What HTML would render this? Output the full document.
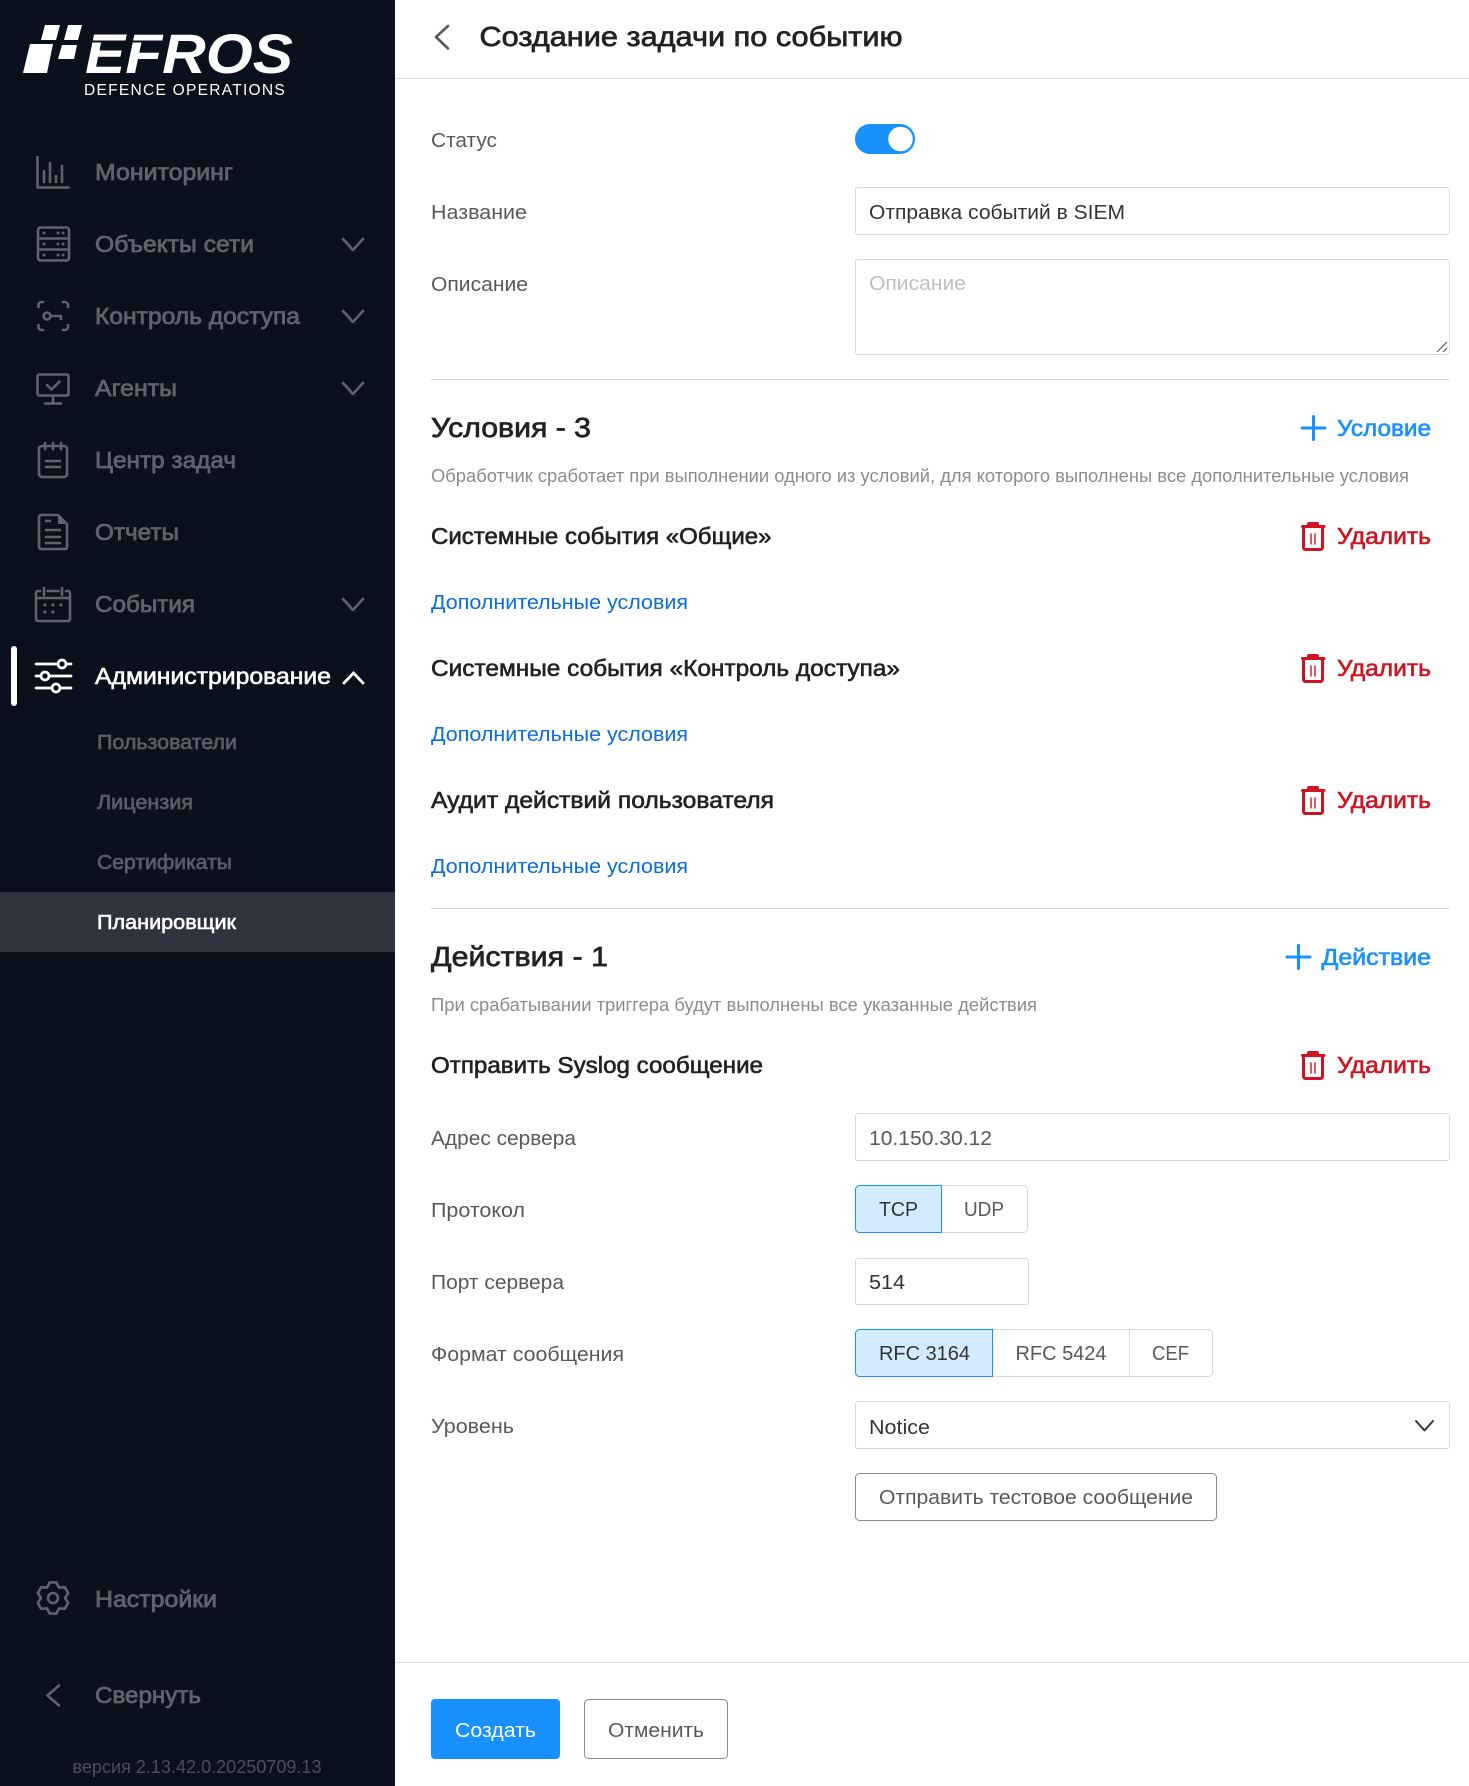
<!DOCTYPE html>
<html lang="ru"><head><meta charset="utf-8"><title>Создание задачи по событию</title>
<style>
html,body{margin:0;padding:0;background:#fff;width:1469px;height:1786px;overflow:hidden}
svg{display:block}
text{font-family:"Liberation Sans",Arial,sans-serif;white-space:pre}
.n{font-size:22.8px;fill:#5f636d;stroke:#5f636d;stroke-width:.75px}
.s{font-size:20.5px;fill:#595d67;stroke:#595d67;stroke-width:.7px}
.n.w,.s.w{fill:#fff;stroke:#fff;stroke-width:.6px}
.l{font-size:20.5px;fill:#595959}
.v{font-size:20.5px;fill:#333}
.h{font-size:27.3px;fill:#222;stroke:#222;stroke-width:.7px}
.t{font-size:22.8px;fill:#222;stroke:#222;stroke-width:.6px}
.d{font-size:18.2px;fill:#8c8c8c}
.a{font-size:22.8px;fill:#1890ff;stroke:#1890ff;stroke-width:.6px}
.r{font-size:22.8px;fill:#cf1322;stroke:#cf1322;stroke-width:.6px}
.k{font-size:20.5px;fill:#096dd9}
.ic{fill:none;stroke:#5f636d;stroke-width:2.6;stroke-linecap:round;stroke-linejoin:round}
.dot{fill:#5f636d;stroke:none}
.bd{fill:#fff;stroke:#d9d9d9;stroke-width:1}
</style></head><body>
<svg width="1469" height="1786" viewBox="0 0 1469 1786" xmlns="http://www.w3.org/2000/svg">
<rect width="1469" height="1786" fill="#fff"/>
<rect width="395" height="1786" fill="#0b111c"/>

<!-- logo -->
<g fill="#fff">
<polygon points="23,73 30,44 53,44 47,73"/>
<polygon points="45,25 60,25 56,40 41,40"/>
<polygon points="68,25 82,25 78,40 64,40"/>
<polygon points="62,45 77,45 74,59 58,59"/>
</g>
<text x="85" y="73" font-size="56" font-weight="700" font-style="italic" fill="#fff" textLength="208" lengthAdjust="spacingAndGlyphs">EFROS</text>
<rect x="88" y="40.500" width="80" height="2" fill="#0b111c"/>
<text x="84" y="95" font-size="16" letter-spacing="1.300" fill="#fff" textLength="202" lengthAdjust="spacingAndGlyphs">DEFENCE OPERATIONS</text>

<!-- nav text -->
<text class="n" x="95" y="180" textLength="138" lengthAdjust="spacingAndGlyphs">Мониторинг</text>
<text class="n" x="95" y="252" textLength="159" lengthAdjust="spacingAndGlyphs">Объекты сети</text>
<text class="n" x="95" y="324" textLength="205" lengthAdjust="spacingAndGlyphs">Контроль доступа</text>
<text class="n" x="95" y="396" textLength="82" lengthAdjust="spacingAndGlyphs">Агенты</text>
<text class="n" x="95" y="468" textLength="141" lengthAdjust="spacingAndGlyphs">Центр задач</text>
<text class="n" x="95" y="540" textLength="84" lengthAdjust="spacingAndGlyphs">Отчеты</text>
<text class="n" x="95" y="612" textLength="100" lengthAdjust="spacingAndGlyphs">События</text>
<text class="n w" x="95" y="684" textLength="236" lengthAdjust="spacingAndGlyphs">Администрирование</text>
<text class="s" x="97" y="749" textLength="140" lengthAdjust="spacingAndGlyphs">Пользователи</text>
<text class="s" x="97" y="809" textLength="96" lengthAdjust="spacingAndGlyphs">Лицензия</text>
<text class="s" x="97" y="869" textLength="135" lengthAdjust="spacingAndGlyphs">Сертификаты</text>
<rect x="0" y="892" width="395" height="60" fill="#2e333e"/>
<text class="s w" x="97" y="929" textLength="139" lengthAdjust="spacingAndGlyphs">Планировщик</text>
<text class="n" x="95" y="1607" textLength="122" lengthAdjust="spacingAndGlyphs">Настройки</text>
<text class="n" x="95" y="1703" textLength="106" lengthAdjust="spacingAndGlyphs">Свернуть</text>
<text x="72.500" y="1773" font-size="18.2" fill="#4b4f59" textLength="249" lengthAdjust="spacingAndGlyphs">версия 2.13.42.0.20250709.13</text>

<rect x="11" y="646" width="6" height="60" rx="3" fill="#fff"/>

<!-- nav icons -->
<g class="ic">
<path d="M37.500 157V187.500H68.500M44 171V182M50 163V182M56 176V182M62 166V182"/>
<rect x="38" y="227.500" width="31" height="33" rx="2.500"/><path d="M38 238.500H69M38 249.500H69"/>
<path d="M38.500 307V305a3 3 0 0 1 3-3H43M63 302h2a3 3 0 0 1 3 3v2M68 325v2a3 3 0 0 1-3 3H63M43 330h-1.500a3 3 0 0 1-3-3v-2"/>
<circle cx="47" cy="316" r="3.500"/><path d="M50.500 316H61V319"/>
<rect x="37.500" y="374.500" width="31" height="21" rx="2"/><path d="M47 385L51.500 389.500L59.500 381.500M53 396V403M45 403.500H61"/>
<rect x="39" y="446" width="28" height="31" rx="3"/><path d="M45 443V449M53 443V449M61 443V449M46 461H60M46 467H60"/>
<path d="M41 515H58L67 524V547a2 2 0 0 1-2 2H41a2 2 0 0 1-2-2V517a2 2 0 0 1 2-2zM46 521H50M46 530H60M46 537H60M46 543H60"/>
<path d="M40 591H38a2 2 0 0 0-2 2V619a2 2 0 0 0 2 2H68a2 2 0 0 0 2-2V593a2 2 0 0 0-2-2H66M44 588V595M62 588V595M47.500 591H58.500M37 598H69"/>
<path d="M343 239L353 250L363 239M343 311L353 322L363 311M343 383L353 394L363 383M343 599L353 610L363 599"/>
<path d="M49.700 1582.400H56.300L59 1587.600L64.900 1587.300L68.200 1593.100L65 1598L68.200 1602.900L64.900 1608.700L59 1608.400L56.300 1613.600H49.700L47 1608.400L41.100 1608.700L37.800 1602.900L41 1598L37.800 1593.100L41.100 1587.300L47 1587.600Z"/>
<circle cx="53" cy="1598" r="5"/>
<path d="M59 1685.500L47.500 1695.500L59 1705.500"/>
</g>
<polygon points="58,515 67,524 58,524" fill="#5f636d"/>
<g class="dot">
<circle cx="44" cy="233" r="1.500"/><circle cx="58" cy="233" r="1.500"/><circle cx="63" cy="233" r="1.500"/>
<circle cx="44" cy="244" r="1.500"/><circle cx="58" cy="244" r="1.500"/><circle cx="63" cy="244" r="1.500"/>
<circle cx="44" cy="255" r="1.500"/><circle cx="58" cy="255" r="1.500"/><circle cx="63" cy="255" r="1.500"/>
<circle cx="45" cy="605" r="1.600"/><circle cx="53" cy="605" r="1.600"/><circle cx="61" cy="605" r="1.600"/>
<circle cx="45" cy="612" r="1.600"/><circle cx="53" cy="612" r="1.600"/>
</g>
<g fill="#0b111c" stroke="#fff" stroke-width="2.700" stroke-linecap="round">
<path d="M36 664H71M36 676H71M36 688H71"/>
<circle cx="62" cy="664" r="4"/><circle cx="45" cy="676" r="4"/><circle cx="56" cy="688" r="4"/>
<path d="M344 683L353.500 673L363 683" fill="none" stroke-width="2.800"/>
</g>

<!-- header -->
<rect x="395" y="78" width="1074" height="1" fill="#d9d9d9"/>
<path d="M448 26L436 37L448 48.500" fill="none" stroke="#595959" stroke-width="2.600" stroke-linecap="round" stroke-linejoin="round"/>
<text class="h" x="479.500" y="46" textLength="423" lengthAdjust="spacingAndGlyphs">Создание задачи по событию</text>

<!-- top form -->
<text class="l" x="431" y="147" textLength="66" lengthAdjust="spacingAndGlyphs">Статус</text>
<rect x="855" y="124" width="60" height="30" rx="15" fill="#1890ff"/>
<circle cx="900.500" cy="139" r="12.300" fill="#fff"/>
<text class="l" x="431" y="219" textLength="96" lengthAdjust="spacingAndGlyphs">Название</text>
<rect class="bd" x="855.500" y="187.500" width="594" height="47" rx="2.500"/>
<text class="v" x="869" y="219" textLength="256" lengthAdjust="spacingAndGlyphs">Отправка событий в SIEM</text>
<text class="l" x="431" y="291" textLength="97" lengthAdjust="spacingAndGlyphs">Описание</text>
<rect class="bd" x="855.500" y="259.500" width="594" height="95" rx="2.500"/>
<text class="l" style="fill:#bfbfbf" x="869" y="290" textLength="97" lengthAdjust="spacingAndGlyphs">Описание</text>
<path d="M1437 352L1447 342M1443 352L1447 348" stroke="#595959" stroke-width="1.200" fill="none"/>
<rect x="431" y="379" width="1019" height="1" fill="#d9d9d9"/>

<!-- conditions -->
<text class="h" x="431" y="437" textLength="160" lengthAdjust="spacingAndGlyphs">Условия - 3</text>
<path d="M1302 428H1325M1313.500 416.500V439.500" stroke="#1890ff" stroke-width="3" stroke-linecap="round"/>
<text class="a" x="1337" y="436" textLength="94" lengthAdjust="spacingAndGlyphs">Условие</text>
<text class="d" x="431" y="482" textLength="978" lengthAdjust="spacingAndGlyphs">Обработчик сработает при выполнении одного из условий, для которого выполнены все дополнительные условия</text>

<text class="t" x="431" y="544" textLength="340.500" lengthAdjust="spacingAndGlyphs">Системные события «Общие»</text>
<text class="r" x="1337" y="544" textLength="94" lengthAdjust="spacingAndGlyphs">Удалить</text>
<g fill="none" stroke="#cf1322" stroke-linejoin="round" stroke-linecap="round">
<g><path d="M1303.500 528V547.500a2 2 0 0 0 2 2H1320.500a2 2 0 0 0 2-2V528" stroke-width="3"/><path d="M1302.500 526.500H1324" stroke-width="3"/><path d="M1309 524H1317" stroke-width="4"/><path d="M1311 534V544M1315 534V544" stroke-width="1.400"/></g>
<g transform="translate(0,132)"><path d="M1303.500 528V547.500a2 2 0 0 0 2 2H1320.500a2 2 0 0 0 2-2V528" stroke-width="3"/><path d="M1302.500 526.500H1324" stroke-width="3"/><path d="M1309 524H1317" stroke-width="4"/><path d="M1311 534V544M1315 534V544" stroke-width="1.400"/></g>
<g transform="translate(0,264)"><path d="M1303.500 528V547.500a2 2 0 0 0 2 2H1320.500a2 2 0 0 0 2-2V528" stroke-width="3"/><path d="M1302.500 526.500H1324" stroke-width="3"/><path d="M1309 524H1317" stroke-width="4"/><path d="M1311 534V544M1315 534V544" stroke-width="1.400"/></g>
<g transform="translate(0,529)"><path d="M1303.500 528V547.500a2 2 0 0 0 2 2H1320.500a2 2 0 0 0 2-2V528" stroke-width="3"/><path d="M1302.500 526.500H1324" stroke-width="3"/><path d="M1309 524H1317" stroke-width="4"/><path d="M1311 534V544M1315 534V544" stroke-width="1.400"/></g>
</g>
<text class="k" x="431" y="609" textLength="257" lengthAdjust="spacingAndGlyphs">Дополнительные условия</text>

<text class="t" x="431" y="676" textLength="469" lengthAdjust="spacingAndGlyphs">Системные события «Контроль доступа»</text>
<text class="r" x="1337" y="676" textLength="94" lengthAdjust="spacingAndGlyphs">Удалить</text>
<text class="k" x="431" y="741" textLength="257" lengthAdjust="spacingAndGlyphs">Дополнительные условия</text>

<text class="t" x="431" y="808" textLength="343" lengthAdjust="spacingAndGlyphs">Аудит действий пользователя</text>
<text class="r" x="1337" y="808" textLength="94" lengthAdjust="spacingAndGlyphs">Удалить</text>
<text class="k" x="431" y="873" textLength="257" lengthAdjust="spacingAndGlyphs">Дополнительные условия</text>

<rect x="431" y="908" width="1019" height="1" fill="#d9d9d9"/>

<!-- actions -->
<text class="h" x="431" y="966" textLength="177" lengthAdjust="spacingAndGlyphs">Действия - 1</text>
<path d="M1287 957H1310M1298.500 945.500V968.500" stroke="#1890ff" stroke-width="3" stroke-linecap="round"/>
<text class="a" x="1321.500" y="965" textLength="109.500" lengthAdjust="spacingAndGlyphs">Действие</text>
<text class="d" x="431" y="1011" textLength="606" lengthAdjust="spacingAndGlyphs">При срабатывании триггера будут выполнены все указанные действия</text>
<text class="t" x="431" y="1073" textLength="332" lengthAdjust="spacingAndGlyphs">Отправить Syslog сообщение</text>
<text class="r" x="1337" y="1073" textLength="94" lengthAdjust="spacingAndGlyphs">Удалить</text>

<text class="l" x="431" y="1145" textLength="145" lengthAdjust="spacingAndGlyphs">Адрес сервера</text>
<rect class="bd" x="855.500" y="1113.500" width="594" height="47" rx="2.500"/>
<text class="l" x="869" y="1145" textLength="123" lengthAdjust="spacingAndGlyphs">10.150.30.12</text>

<text class="l" x="431" y="1217" textLength="94" lengthAdjust="spacingAndGlyphs">Протокол</text>
<rect class="bd" x="855.500" y="1185.500" width="172" height="47" rx="4"/>
<path d="M941.500 1185.500H859.500a4 4 0 0 0-4 4V1228.500a4 4 0 0 0 4 4H941.500Z" fill="#d4ebff" stroke="#1890ff"/>
<text class="v" x="879" y="1216" textLength="39" lengthAdjust="spacingAndGlyphs">TCP</text>
<text class="l" x="964" y="1216" textLength="40" lengthAdjust="spacingAndGlyphs">UDP</text>

<text class="l" x="431" y="1289" textLength="133" lengthAdjust="spacingAndGlyphs">Порт сервера</text>
<rect class="bd" x="855.500" y="1258.500" width="173" height="46" rx="2.500"/>
<text class="v" x="869" y="1289" textLength="36" lengthAdjust="spacingAndGlyphs">514</text>

<text class="l" x="431" y="1361" textLength="193" lengthAdjust="spacingAndGlyphs">Формат сообщения</text>
<rect class="bd" x="855.500" y="1329.500" width="357" height="47" rx="4"/>
<path d="M1129.500 1330V1376" stroke="#d9d9d9" fill="none"/>
<path d="M992.500 1329.500H859.500a4 4 0 0 0-4 4V1372.500a4 4 0 0 0 4 4H992.500Z" fill="#d4ebff" stroke="#1890ff"/>
<text class="v" x="879" y="1360" textLength="91" lengthAdjust="spacingAndGlyphs">RFC 3164</text>
<text class="l" x="1015.500" y="1360" textLength="91" lengthAdjust="spacingAndGlyphs">RFC 5424</text>
<text class="l" x="1152" y="1360" textLength="37" lengthAdjust="spacingAndGlyphs">CEF</text>

<text class="l" x="431" y="1433" textLength="83" lengthAdjust="spacingAndGlyphs">Уровень</text>
<rect class="bd" x="855.500" y="1401.500" width="594" height="47" rx="2.500"/>
<text class="v" x="869" y="1434" textLength="61" lengthAdjust="spacingAndGlyphs">Notice</text>
<path d="M1416 1421L1424.500 1430.500L1433 1421" fill="none" stroke="#333" stroke-width="2" stroke-linecap="round" stroke-linejoin="round"/>

<rect x="855.500" y="1473.500" width="361" height="47" rx="4" fill="#fff" stroke="#8c8c8c"/>
<text class="l" x="879" y="1504" textLength="314" lengthAdjust="spacingAndGlyphs">Отправить тестовое сообщение</text>

<!-- footer -->
<rect x="395" y="1662" width="1074" height="1" fill="#d9d9d9"/>
<rect x="431" y="1699" width="129" height="60" rx="4" fill="#1890ff"/>
<text class="l" style="fill:#fff" x="455" y="1737" textLength="81" lengthAdjust="spacingAndGlyphs">Создать</text>
<rect x="584.500" y="1699.500" width="143" height="59" rx="4" fill="#fff" stroke="#8c8c8c"/>
<text class="l" x="608" y="1737" textLength="96" lengthAdjust="spacingAndGlyphs">Отменить</text>
</svg>
</body></html>
